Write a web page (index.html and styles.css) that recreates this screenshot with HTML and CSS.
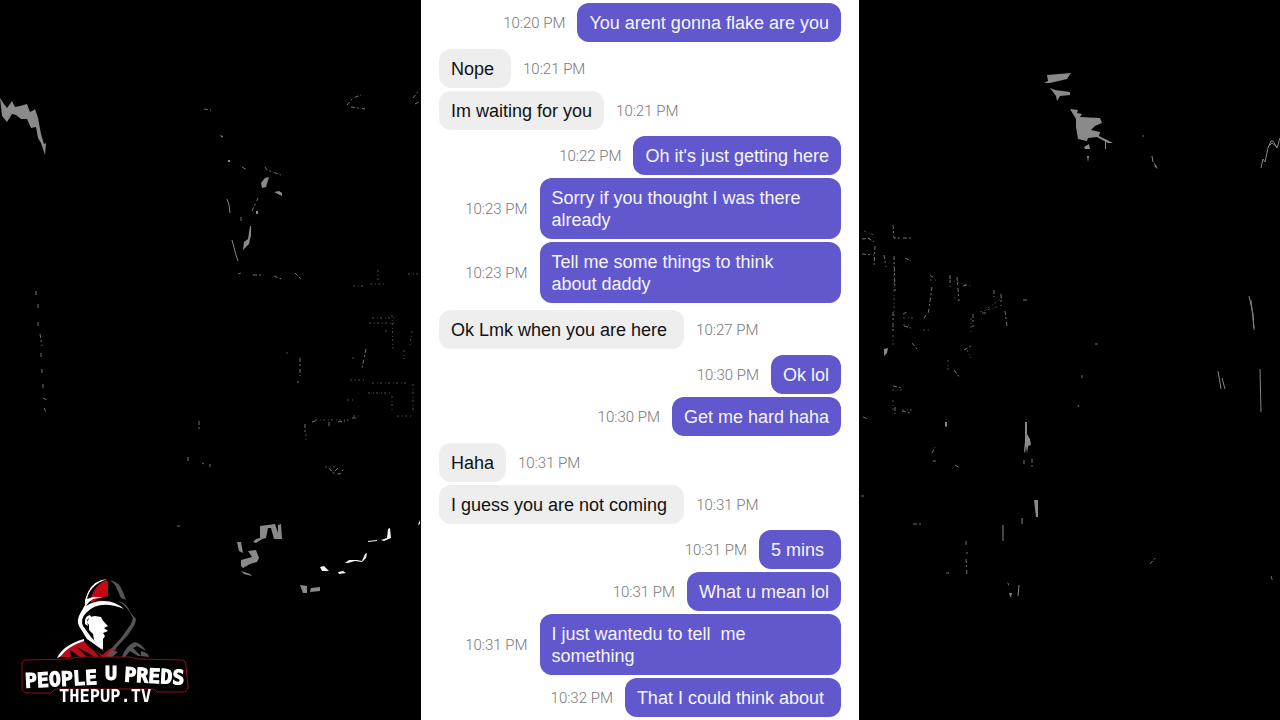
FILE: index.html
```html
<!DOCTYPE html>
<html lang="en">
<head>
<meta charset="utf-8">
<meta name="viewport" content="width=device-width, initial-scale=1">
<title>Chat log</title>
<link rel="stylesheet" href="styles.css">
</head>
<body>
<svg class="backdrop" viewBox="0 0 1280 720" preserveAspectRatio="xMidYMid slice" aria-hidden="true">
  <g fill="#8a8a8a">
    <path d="M0 98l4 6 3 4 5-7 3 6 5-1 7-2 3 8 4-2 1-1 3 9 3 16 3 10 2-1-1 12-4-12-3-5-2-11-5 1-4-9-6 0-5-4-4-1-5 8-5-6z"/>
    <path d="M260 526l15-2 3 9 0-8 3-1 1 15-8 0-3-11-3 0-2 10-4 1-6 4-3-1 3-3 4-1zM237 542l4 0 2 11-4-2zM241 560l11-3-4-6 8-1 3 8-2 4-7 2-7 4-2-2zM241 571l9 3 2 2-8-2zM300 585l7 1 0 7-4 0zM311 588l9-1 0 4-10 1z"/>
    <path d="M261 183l4-5 4-1-3 10-4 1zM274 192l5-1 3 2 0 3-4-2zM250 226l1 0 0 9-2 9-6 6 1-8 4-3zM256 211h2v3h-2zM228 160l2 0 0 2-2 0zM220 135l3 1-1 2z"/>
    <path d="M1047 75l24-2-4 6-17 4-6 0 4-2zM1050 88l5 2 15 2 0 3-10 1-3 5-1-5zM1070 109l8 1-1 3 5 1-2 3 20 1 2 5-7 3-4 4 9 2-1 4 14 7-5 0-11-6-9 1-1 3-9-2-2-12 0-8zM1084 147l5-3 1 5-5 0zM1087 156l2 0-1 6zM1105 140l1 0 0 9-1 0z"/>
    <path d="M1025 422l2 0 0 12 3 5 1 6-3 1-1 8-1-8-1 7-1-2 1-10zM1034 500l4 0 0 17-2 0zM1007 582l2 2 0 2zM1009 593l3 0-1 5zM884 349l4-1-1 5-3 3zM945 422l2 0 0 5-2-1zM1151 157l2 5zM1154 162l4 7-3-2z"/>
  </g>
  <g class="shard">
    <path d="M1261 168l2-9 2 3 3-14 3-7 2 0 4 7 3-10M1268 147l4-4 5 4M1249 296l4 18 1 16M1251 300l3 28M1218 371l3 18M1222 378l3 11M1260 369l1 43M1003 525v16M1022 518v6M1019 585l-1 11M1152 156l1 6M227 199l2 6 1 8M232 240l4 15 2 6"/>
  </g>
  <g fill="#f4f4f4">
    <path d="M345 563l4-3 8 0 5 1 3-7 2-1-1 5-4 4-7-1-7 2zM368 541l9-1 0 1-9 1zM388 529l2-1 1 10-7 3-3-1 6-2zM320 567l4-1 5 5-7 0zM338 572l5-1 3 2-7 1zM418 525l2-5v4z"/>
  </g>
  <g class="trace">
    <path d="M204 109l7 1M242 167l5 3M265 167l2 3 14 5M347 105l6-7 8-3M351 107l14 2M413 98l7-9M415 104l4-2M241 217v5M252 211l6-13M238 274l3-1M253 275l9 0M274 276l10 4M295 273l6 6"/>
    <path d="M36 291v4M38 304v4M38 322v4M40 334l2 12M41 353v5M42 369v5M43 384v4M43 398l4 2M44 408l2 4M199 421v8M188 457v4M202 463l2 1M210 464v3M177 526h3M300 358v18M298 381v2M305 424v10M312 422l6-2M329 422v6M338 422l7-1M352 418h6M366 349l-4 19M329 468l4 5 7 1 4-6M335 471l4-4"/>
    <path d="M868 238l6 4M862 239l11-1M893 225l1 13 18 0M862 254l12 1M875 246l-1 22M884 255l2 12M894 256l1 35M905 258l6 3M930 275l5 4M950 275v12M957 277l2 24M963 286l4-1M932 287l-4 28M994 290v7M1001 294v12M1023 300h4M1005 311l2 15M893 312v22M903 314l4-2M904 326l7 2M924 318l2-3M973 314v13M982 313h4M912 343l6 7M964 350l7-4M954 370l6 8M893 386l9 2M895 407v7M902 411l9 2M863 417l5 2M932 453l3-6M933 461h3M955 465l5 3M861 496h3M913 524h8M966 541v4M967 552v2M966 559l1 17M946 573h3M1082 375v3M1095 344h3M1078 405l1 2M1024 460v4M1032 459v8M1150 564l7-8M1271 576l2 6M1143 135v2"/>
  </g>
  <g class="grain">
    <path d="M353 286h13M370 284h14M378 270v12M408 274h12M372 318h24M369 323h25M386 330v5M392 315l1 34M412 331l-2 14M404 350v9M353 357v4M372 383h36M368 393h22M350 380h16M347 400h8M392 396v14M413 384v26M397 416h16M353 416h6M306 434v8M315 420h36M325 467h10M286 353h4"/>
    <path d="M864 231l12 5M894 258v60M903 318h10M903 325h8M930 280h6M949 280l22 6M954 297l4 4M971 318v16M980 312l20-6M988 308l14-10M893 335v10M967 350l4 8M948 360v12M892 390h12M893 400v12M902 410h10M923 330h6"/>
  </g>
</svg>

<div class="stage">
  <main class="chat" aria-label="Conversation">
    <ol class="messages">
      <li class="row sent"><p class="bubble">You arent gonna flake are you</p><time class="time">10:20 PM</time></li>
      <li class="row turn"><p class="bubble">Nope </p><time class="time">10:21 PM</time></li>
      <li class="row"><p class="bubble">Im waiting for you</p><time class="time">10:21 PM</time></li>
      <li class="row sent turn"><p class="bubble">Oh it's just getting here</p><time class="time">10:22 PM</time></li>
      <li class="row sent"><p class="bubble">Sorry if you thought I was there already</p><time class="time">10:23 PM</time></li>
      <li class="row sent"><p class="bubble">Tell me some things to think about&nbsp;daddy</p><time class="time">10:23 PM</time></li>
      <li class="row turn"><p class="bubble">Ok Lmk when you are here </p><time class="time">10:27 PM</time></li>
      <li class="row sent turn"><p class="bubble">Ok lol</p><time class="time">10:30 PM</time></li>
      <li class="row sent"><p class="bubble">Get me hard haha</p><time class="time">10:30 PM</time></li>
      <li class="row turn"><p class="bubble">Haha</p><time class="time">10:31 PM</time></li>
      <li class="row"><p class="bubble">I guess you are not coming </p><time class="time">10:31 PM</time></li>
      <li class="row sent turn"><p class="bubble">5 mins </p><time class="time">10:31 PM</time></li>
      <li class="row sent"><p class="bubble">What u mean lol</p><time class="time">10:31 PM</time></li>
      <li class="row sent"><p class="bubble">I just wantedu to tell  me something</p><time class="time">10:31 PM</time></li>
      <li class="row sent"><p class="bubble">That I could think about </p><time class="time">10:32 PM</time></li>
    </ol>
  </main>
</div>

<svg class="logo" viewBox="0 0 190 140" role="img" aria-label="People v Preds, thepvp.tv">
  <path fill="#b80d18" d="M48 87q7-10 25-17l7 8 16 9H48z"/>
  <path fill="#b80d18" d="M98 80l9-4-4 11H90z"/>
  <path fill="#000" d="M60 80l10 7H61zM67 77l18 10h-8zM80 75l12 12h-3z"/>
  <path fill="#fff" d="M47 88q6-13 27-19l0 2q-16 5-24 16z"/>
  <path fill="#c40814" d="M81 28q4-13 15-18l2 2 0 14-9 2-8 5zM77 36q9-7 18-5l6 2-16 1-8 4z"/>
  <path fill="#fff" d="M97 9q-13 1-19 13l-3 8 0 5-4 7q-5 8-2 14l8 13 17 12-13-14-8-11q-3-7 3-13 13-14 38-4-9-8-20-8-10 0-18 5 2-4 7-7l10-2-10 0-6 2q3-14 20-20z"/>
  <path fill="#555" d="M99 10q10 1 14 12l3 8-5-2-4-9q-3-7-8-9zM108 31q9 2 12 11l6 7-1 5-7 11-12 13q-3 3-6 2l11-12 10-14 2-6q-6-12-15-17zM101 80l7 2-6 5-6 0zM112 87q4-12 13-15 7 2 11 9l-9-5-4 2 8 8-3 0-8-5-6 7zM131 81q8 2 8 6l-8-1z"/>
  <path fill="#fff" d="M75 54q-1-8 5-9l1 2q-4 2-4 4l1 5zM80 47l5-1 6 1q1 3 4 6l3 3-4 2 4 3-5 2 2 3-2 3 0 10-3-1-6-8-1-6-4-4 0-5-2-3z"/>
  <path class="plate" d="M16 90l45-1q3-2 9-2l50 0 8 2 44 1q4 1 4 5l2 22q-1 5-5 5l-26 0-3-3H45l-4 4-24 0q-5-1-5-6V95q0-5 4-5z"/>
  <g class="wordmark">
    <text x="15" y="116" transform="rotate(-3 50 112)">PEOPLE</text>
    <text x="95" y="110">U</text>
    <text x="114" y="113" transform="rotate(3 144 110)">PREDS</text>
  </g>
  <text class="site" x="49" y="132">THEPUP.TV</text>
</svg>
</body>
</html>
```
FILE: styles.css
```css
* {
  box-sizing: border-box;
}

body {
  margin: 0;
  background: #000;
  font-family: "Liberation Sans", Arial, sans-serif;
}

.backdrop {
  position: absolute;
  inset: 0;
  z-index: -1;
  width: 100%;
  height: 100%;
}

.shard {
  fill: none;
  stroke: #858585;
  stroke-width: 1;
}

.trace {
  fill: none;
  stroke: #737373;
  stroke-width: 1;
  stroke-dasharray: 4 2 2 3;
}

.grain {
  fill: none;
  stroke: #4c4c4c;
  stroke-width: 1;
  stroke-dasharray: 2 3 1 2;
}

.stage {
  display: grid;
  grid-template-columns: 421fr 438fr 421fr;
  min-height: 100vh;
}

.chat {
  grid-column: 2;
  padding: 3px 18px 0;
  background: #fff;
}

.messages {
  display: flex;
  flex-direction: column;
  gap: 3px;
  margin: 0;
  padding: 0;
  list-style: none;
}

.row {
  display: flex;
  align-items: center;
  gap: 12px;
}

.row.sent {
  flex-direction: row-reverse;
}

.row.turn {
  margin-top: 4px;
}

.row.sent.turn {
  margin-top: 3px;
}

.bubble {
  max-width: 75%;
  margin: 0;
  padding: 9px 12px 8px;
  border-radius: 12px;
  background: #eee;
  color: #111;
  font-size: 18px;
  line-height: 22px;
  white-space: break-spaces;
}

.sent .bubble {
  background: #6058cc;
  color: #f6f5ff;
}

.time {
  color: #777;
  font-family: Roboto, "Liberation Sans", sans-serif;
  font-size: 15px;
  font-weight: 300;
  line-height: 20px;
  white-space: nowrap;
}

.logo {
  position: fixed;
  bottom: 10px;
  left: 10px;
  width: 190px;
  height: 140px;
}

.plate {
  fill: #050000;
  stroke: #8a0f20;
  stroke-width: 1;
}

.wordmark,
.site {
  fill: #fff;
  font-family: "DejaVu Sans Mono", monospace;
  font-weight: 700;
}

.wordmark {
  font-size: 20px;
  stroke: #fff;
  stroke-width: 1;
}

.site {
  font-size: 17px;
}
```
